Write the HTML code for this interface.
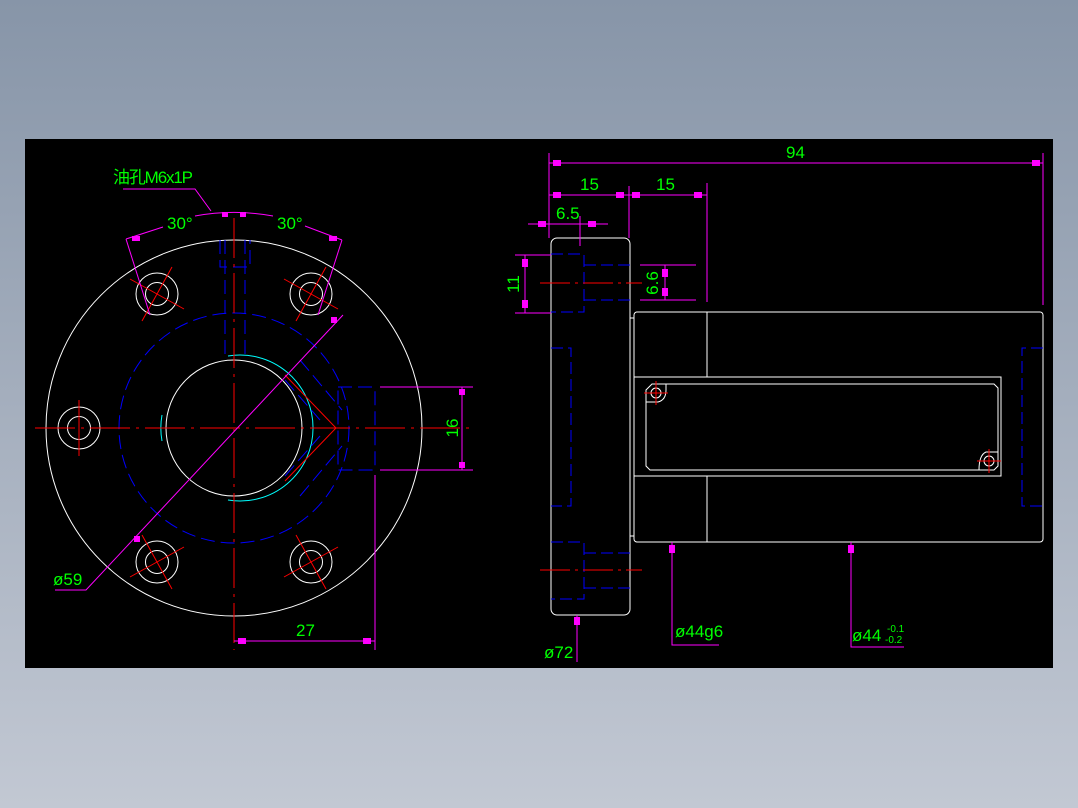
<!DOCTYPE html>
<html><head><meta charset="utf-8"><style>
html,body{margin:0;padding:0}
body{width:1078px;height:808px;background:linear-gradient(#8795a8,#c2c8d3);overflow:hidden}
svg{position:absolute;left:0;top:0}
text{font-family:"Liberation Sans","Noto Sans CJK SC",sans-serif;fill:#00ff00;font-size:17px}
</style></head><body>
<svg width="1078" height="808" viewBox="0 0 1078 808">
<rect x="25" y="139" width="1028" height="529" fill="#000"/>
<g fill="none" stroke-width="1">
<!-- LEFT VIEW -->
<g stroke="#fff">
<circle cx="234" cy="428" r="188"/>
<circle cx="234" cy="428" r="68"/>
<circle cx="157" cy="294" r="21"/><circle cx="157" cy="294" r="11.5"/>
<circle cx="311" cy="294" r="21"/><circle cx="311" cy="294" r="11.5"/>
<circle cx="157" cy="562" r="21"/><circle cx="157" cy="562" r="11.5"/>
<circle cx="311" cy="562" r="21"/><circle cx="311" cy="562" r="11.5"/>
<circle cx="79" cy="428" r="21"/><circle cx="79" cy="428" r="11.5"/>
</g>
<path d="M228 356 A73 73 0 1 1 228 500" stroke="#0ff"/>
<path d="M162 415 A73 73 0 0 0 162 441" stroke="#0ff"/>
<g stroke="#0000ff" stroke-dasharray="14,6">
<circle cx="234" cy="428" r="115"/>
<path d="M338 387 H372 Q375 387 375 390 V467 Q375 470 372 470 H338 Z"/>
<path d="M225 240 V360 M245 240 V360 M220 240 V267 H250 V240"/>
<path d="M300 360 L342 410 M300 496 L342 446 M285 380 L320 420 M285 476 L320 436"/>
</g>
<g stroke="#ff0000">
<path d="M35 428 H470" stroke-dasharray="40,6,3,6"/>
<path d="M234 218 V650" stroke-dasharray="40,6,3,6"/>
<path d="M130 279 L184 309 M142 321 L172 267 M284 279 L338 309 M296 321 L326 267 M130 577 L184 547 M142 535 L172 589 M284 577 L338 547 M296 535 L326 589 M79 400 V456"/>
<path d="M285 375 L336 428 L285 481"/>
</g>
<g stroke="#ff00ff">
<path d="M343 315 L86 590 H55"/>
<path d="M123 189 H195 L211 211"/>
<path d="M126 239 L163 227 M342 240 L305 226 M195 216 A215 215 0 0 1 273 216 M126 239 L150 315 M342 240 L318 315"/>
<path d="M380 387 H473 M380 470 H473 M462 387 V470 M375 475 V650 M234 641 H375"/>
</g>
<g fill="#ff00ff">
<rect x="459" y="389" width="6" height="6"/><rect x="459" y="462" width="6" height="6"/>
<rect x="238" y="638" width="8" height="6"/><rect x="363" y="638" width="8" height="6"/>
<rect x="331" y="317" width="6" height="6"/><rect x="134" y="536" width="6" height="6"/>
<rect x="132" y="236" width="8" height="5"/><rect x="329" y="236" width="8" height="5"/>
<rect x="222" y="212" width="6" height="5"/><rect x="240" y="212" width="6" height="5"/>
</g>
<!-- RIGHT VIEW -->
<g stroke="#fff">
<rect x="551" y="238" width="79" height="377" rx="6"/>
<path d="M630 318 H634 M630 536 H634"/>
<rect x="634" y="312" width="409" height="230" rx="3"/>
<path d="M707 312 V377 M707 476 V542"/>
<rect x="634" y="377" width="367" height="99"/>
<path d="M652 384 H994 L998 388 V466 L994 470 H650 L646 466 V390 Z"/>
<circle cx="656" cy="393" r="5"/><circle cx="989" cy="461" r="5"/>
<path d="M646 402 H658 Q666 400 666 390 V384 M998 452 H986 Q979 455 979 470"/>
</g>
<g stroke="#0000ff" stroke-dasharray="12,5">
<path d="M551 254 H584 V312 H551 M584 265 H630 M584 300 H630"/>
<path d="M551 348 H571 V506 H551"/>
<path d="M1043 348 H1022 V506 H1043"/>
<path d="M551 542 H584 V599 H551 M584 553 H630 M584 588 H630"/>
</g>
<g stroke="#ff0000">
<path d="M540 283 H642 M540 570 H642" stroke-dasharray="30,5,3,5"/>
<path d="M644 393 H668 M656 381 V405 M977 461 H1001 M989 449 V473"/>
</g>
<g stroke="#ff00ff">
<path d="M549 153 V238 M1043 153 V305 M629 186 V238 M707 183 V302"/>
<path d="M549 163 H1043 M549 195 H707 M528 224 H608 M580 216 V246"/>
<path d="M515 255 H551 M515 313 H551 M525 255 V313"/>
<path d="M640 265 H696 M640 300 H696 M665 265 V300"/>
<path d="M577 615 V662 M672 542 V645 H719 M851 542 V647 H904"/>
</g>
<g fill="#ff00ff">
<rect x="553" y="160" width="8" height="6"/><rect x="1032" y="160" width="8" height="6"/>
<rect x="553" y="192" width="8" height="6"/><rect x="616" y="192" width="8" height="6"/><rect x="632" y="192" width="8" height="6"/><rect x="694" y="192" width="8" height="6"/>
<rect x="538" y="221" width="8" height="6"/><rect x="588" y="221" width="8" height="6"/>
<rect x="522" y="259" width="6" height="8"/><rect x="522" y="300" width="6" height="8"/>
<rect x="662" y="269" width="6" height="8"/><rect x="662" y="288" width="6" height="8"/>
<rect x="574" y="617" width="6" height="8"/><rect x="669" y="545" width="6" height="8"/><rect x="848" y="545" width="6" height="8"/>
</g>
</g>
<text x="113" y="183" textLength="80">油孔M6x1P</text>
<text x="167" y="229">30°</text>
<text x="277" y="229">30°</text>
<text x="53" y="585">ø59</text>
<text x="296" y="636">27</text>
<text transform="translate(458,428) rotate(-90)" text-anchor="middle">16</text>
<text x="786" y="158">94</text>
<text x="580" y="190">15</text>
<text x="656" y="190">15</text>
<text x="556" y="219">6.5</text>
<text transform="translate(519,284) rotate(-90)" text-anchor="middle">11</text>
<text transform="translate(658,283) rotate(-90)" text-anchor="middle">6.6</text>
<text x="544" y="658">ø72</text>
<text x="675" y="637">ø44g6</text>
<text x="852" y="641">ø44</text>
<text x="887" y="632" style="font-size:10px">-0.1</text>
<text x="885" y="643" style="font-size:10px">-0.2</text>
</svg>
</body></html>
